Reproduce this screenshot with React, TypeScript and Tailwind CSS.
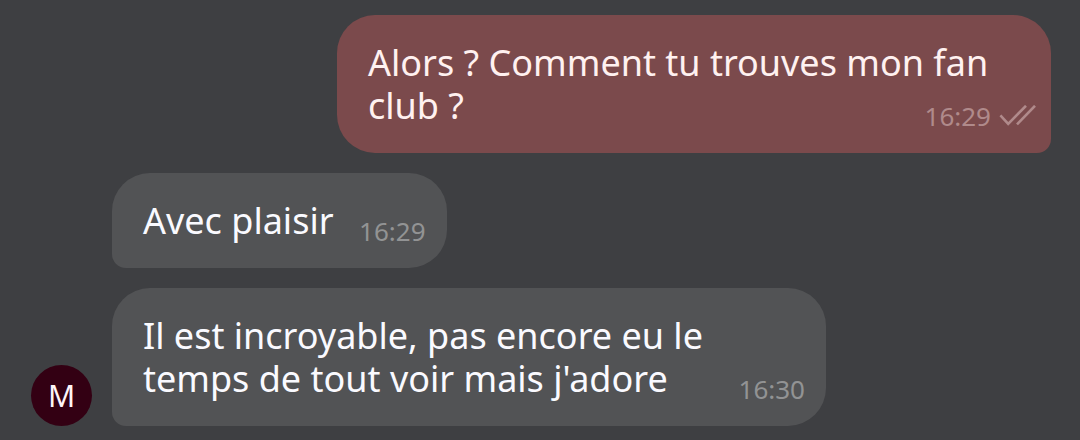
type Message = {
  id: number;
  text: string;
  time: string;
  sent?: boolean;
  author?: string;
};

const messages: Message[] = [
  { id: 1, text: "Alors ? Comment tu trouves mon fan club ?", time: "16:29", sent: true },
  { id: 2, text: "Avec plaisir", time: "16:29" },
  { id: 3, text: "Il est incroyable, pas encore eu le temps de tout voir mais j'adore", time: "16:30", author: "M" },
];

function ReadIcon() {
  return (
    <svg
      role="img"
      aria-label="Lu"
      width="37"
      height="22"
      viewBox="0 0 37 22"
      fill="none"
      stroke="currentColor"
      strokeWidth="2.6"
    >
      <path d="M1.4 10.4l7.8 8.4L27 .8" />
      <path d="M18 19.4L36 .8" />
    </svg>
  );
}

function Bubble({ message }: { message: Message }) {
  const { text, time, sent } = message;

  return (
    <div
      className={
        sent
          ? "grid max-w-[70%] rounded-[38px] rounded-br-[14px] bg-[#7b4a4c] py-[26px] pr-[15px] pl-[31px] text-[#fff1f0]"
          : "grid max-w-[70%] rounded-[38px] rounded-bl-[14px] bg-[#525355] py-[26px] pr-[21px] pl-[31px] text-[#fafaff]"
      }
    >
      <p className="col-start-1 row-start-1 pr-[10px] text-[36px] leading-[43px]">
        {text}
        {/* keeps room for the time at the end of the last line */}
        <span aria-hidden className={sent ? "inline-block w-[124px]" : "inline-block w-[82px]"} />
      </p>
      <div
        className={
          sent
            ? "col-start-1 row-start-1 mb-[2px] flex h-[18px] items-center gap-2 self-end justify-self-end text-[#b08a8b]"
            : "col-start-1 row-start-1 mb-[2px] flex h-[18px] items-center self-end justify-self-end text-[#929394]"
        }
      >
        <time className="text-[26px] leading-[18px]">{time}</time>
        {sent && <ReadIcon />}
      </div>
    </div>
  );
}

export default function App() {
  return (
    <main className="min-h-screen bg-[#3e3f42] pt-[15px] pr-[29px] pb-[14px] pl-[31px] font-['Noto_Sans',sans-serif]">
      <ul className="flex flex-col gap-5">
        {messages.map((message) => (
          <li
            key={message.id}
            className={message.sent ? "flex justify-end" : "flex items-end gap-5"}
          >
            {!message.sent && (
              <div className="w-[61px] shrink-0">
                {message.author && (
                  <div className="flex size-[61px] items-center justify-center rounded-full bg-[#330013] text-[30px] leading-none text-[#fff5f8]">
                    {message.author}
                  </div>
                )}
              </div>
            )}
            <Bubble message={message} />
          </li>
        ))}
      </ul>
    </main>
  );
}
